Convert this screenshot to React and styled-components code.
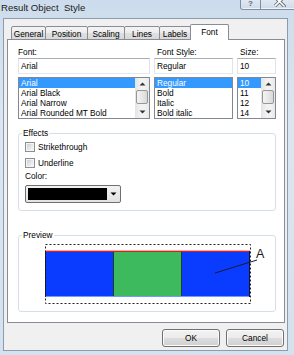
import React from 'react';
import styled, { createGlobalStyle } from 'styled-components';

const Global = createGlobalStyle`
  html, body { margin: 0; padding: 0; background: #d6e3f0; }
  body { font-family: "Liberation Sans", Arial, sans-serif; }
`;

const UI_FONT = '"Liberation Sans", Arial, sans-serif';

const Window = styled.div`
  width: 294px;
  height: 355px;
  box-sizing: border-box;
  display: flex;
  flex-direction: column;
  overflow: hidden;
  background: linear-gradient(180deg, #cddcec 0%, #dbe6f2 35%, #d4e1ee 100%);
  font-family: ${UI_FONT};
  font-size: 8.3px;
  color: #000;
`;

const TitleBar = styled.div`
  height: 18px;
  flex: none;
  display: flex;
  align-items: flex-start;
  justify-content: space-between;
`;

const Title = styled.div`
  padding: 3px 0 0 1px;
  font-size: 9.6px;
  line-height: 10px;
  color: #1a1a1a;
  white-space: pre;
`;

const CaptionButtons = styled.div`
  display: flex;
  margin-right: -10px;
`;

const CaptionButton = styled.div`
  width: ${(p) => p.$w}px;
  height: 10px;
  box-sizing: border-box;
  border: 1px solid #7f8fa3;
  border-top: none;
  border-radius: ${(p) => (p.$first ? '0 0 0 3px' : '0 0 3px 0')};
  margin-left: ${(p) => (p.$first ? 0 : -1)}px;
  background: linear-gradient(180deg, #dfe8f2, #cfdbe8);
  display: flex;
  justify-content: ${(p) => (p.$first ? 'center' : 'flex-start')};
  align-items: flex-start;
  padding-left: ${(p) => (p.$first ? 0 : 13)}px;
  overflow: hidden;
  box-shadow: inset 0 -1px 0 #eef3f8;
`;

const HelpGlyph = styled.span`
  font-family: ${UI_FONT};
  font-size: 8px;
  line-height: 8px;
  font-weight: bold;
  color: #5f6878;
`;

const Client = styled.div`
  flex: none;
  height: 333px;
  box-sizing: border-box;
  margin: 0 6px 4px 3px;
  border: 1px solid #8d9cad;
  background: #f0f0f0;
  padding: 5px 2px 0 3px;
  display: flex;
  flex-direction: column;
`;

const TabStrip = styled.div`
  height: 16px;
  flex: none;
  display: flex;
  align-items: flex-end;
  padding-left: 4px;
  margin-bottom: -1px;
`;

const Tab = styled.div`
  position: relative;
  z-index: ${(p) => (p.$active ? 2 : 1)};
  width: ${(p) => p.$w}px;
  height: ${(p) => (p.$active ? 16 : 14)}px;
  box-sizing: border-box;
  margin-left: ${(p) => (p.$first ? 0 : -1)}px;
  border: 1px solid #898c95;
  border-bottom: ${(p) => (p.$active ? 'none' : '1px solid #898c95')};
  border-radius: 2px 2px 0 0;
  background: ${(p) =>
    p.$active
      ? '#ffffff'
      : 'linear-gradient(180deg, #f4f4f4 0%, #ececec 50%, #e0e0e0 51%, #d8d8d8 100%)'};
  display: flex;
  justify-content: center;
  padding-top: 2px;
  line-height: 10px;
  white-space: nowrap;
  color: #000;
`;

const Panel = styled.div`
  position: relative;
  z-index: 1;
  height: 284px;
  flex: none;
  box-sizing: border-box;
  background: #ffffff;
  border: 1px solid #898c95;
  padding: 7px 8px 0 10px;
  display: flex;
  flex-direction: column;
`;

const FieldGrid = styled.div`
  display: grid;
  grid-template-columns: 132px 79px 39px;
  column-gap: 4px;
`;

const Field = styled.div`
  display: flex;
  flex-direction: column;
`;

const FieldLabel = styled.div`
  height: 10px;
  line-height: 10px;
  padding-left: ${(p) => p.$indent || 0}px;
  white-space: nowrap;
`;

const TextBox = styled.div`
  margin-top: 1px;
  height: 16px;
  box-sizing: border-box;
  border: 1px solid #e2e3ea;
  border-top-color: #abadb3;
  border-bottom-color: #e3e9ef;
  padding: 0 2px;
  line-height: 14px;
  white-space: nowrap;
`;

const ListBox = styled.div`
  margin-top: 3px;
  height: 42px;
  box-sizing: border-box;
  border: 1px solid #828790;
  display: flex;
  overflow: hidden;
  background: #fff;
`;

const ListItems = styled.div`
  flex: 1;
  min-width: 0;
  display: flex;
  flex-direction: column;
`;

const ListItem = styled.div`
  height: 10px;
  line-height: 10px;
  padding-left: 2px;
  white-space: nowrap;
  background: ${(p) => (p.$selected ? '#3399ff' : 'transparent')};
  color: ${(p) => (p.$selected ? '#ffffff' : '#000000')};
`;

const ScrollBar = styled.div`
  width: 14px;
  flex: none;
  display: flex;
  flex-direction: column;
  align-items: center;
  background: linear-gradient(90deg, #e4e4e4, #f2f2f2 40%, #f2f2f2 70%, #e8e8e8);
`;

const ScrollArrow = styled.div`
  height: 12px;
  width: 100%;
  display: flex;
  align-items: center;
  justify-content: center;
`;

const ScrollSpacer = styled.div`
  flex: 1;
`;

const ScrollThumb = styled.div`
  width: 12px;
  height: 14px;
  box-sizing: border-box;
  border: 1px solid #979797;
  border-radius: 2px;
  background: linear-gradient(90deg, #f3f3f3, #e8e8e8 50%, #d8d8d8);
`;

const Group = styled.fieldset`
  margin: ${(p) => p.$mt}px 0 0;
  padding: 0 6px ${(p) => p.$pb}px;
  border: 1px solid #d5dfe5;
  border-radius: 3px;
  min-width: 0;
  display: flex;
  flex-direction: column;
`;

const Legend = styled.legend`
  padding: 0 1px;
  margin-left: -3px;
  height: 10px;
  line-height: 10px;
  color: #000;
`;

const CheckRow = styled.div`
  height: 12px;
  margin-top: ${(p) => p.$mt}px;
  display: flex;
  align-items: center;
  gap: 3px;
  line-height: 10px;
`;

const CheckBox = styled.span`
  width: 10px;
  height: 10px;
  box-sizing: border-box;
  border: 1px solid #8e8f8f;
  box-shadow: inset 0 0 0 1px #f4f4f4;
  background: linear-gradient(135deg, #c6cad0, #eeeeee 70%, #f6f6f6);
`;

const PlainLabel = styled.div`
  margin-top: 2px;
  height: 10px;
  line-height: 10px;
`;

const ColorCombo = styled.div`
  margin-top: 4px;
  width: 96px;
  height: 18px;
  box-sizing: border-box;
  border: 1px solid #707070;
  border-radius: 2px;
  background: linear-gradient(180deg, #f2f2f2, #e2e2e2);
  padding: 2px;
  display: flex;
  gap: 1px;
`;

const ColorSwatch = styled.div`
  flex: 1;
  background: #000;
`;

const ComboArrow = styled.div`
  width: 10px;
  display: flex;
  align-items: center;
  justify-content: center;
`;

const PreviewCanvas = styled.svg`
  display: block;
  margin-bottom: 1px;
`;

const ButtonRow = styled.div`
  margin-top: 6px;
  display: flex;
  justify-content: flex-end;
  gap: 6px;
  padding-right: 1px;
`;

const Button = styled.div`
  width: 58px;
  height: 18px;
  box-sizing: border-box;
  border: 1px solid #707070;
  border-radius: 3px;
  background: linear-gradient(180deg, #f2f2f2 0%, #ebebeb 50%, #dddddd 51%, #cfcfcf 100%);
  box-shadow: inset 0 0 0 1px #fbfbfb;
  display: flex;
  align-items: center;
  justify-content: center;
  line-height: 10px;
  color: #000;
`;

const UpArrow = () => (
  <svg width="7" height="4" viewBox="0 0 7 4">
    <path d="M0.5 3.5 L3.5 0.5 L6.5 3.5 Z" fill="#333" />
  </svg>
);

const DownArrow = ({ color = '#333', w = 7, h = 4 }) => (
  <svg width={w} height={h} viewBox="0 0 7 4">
    <path d="M0.5 0.5 L3.5 3.5 L6.5 0.5 Z" fill={color} />
  </svg>
);

const CloseIcon = () => (
  <svg width="12" height="7" viewBox="0 0 12 7">
    <path d="M1 -3 L10 6 M10 -3 L1 6" stroke="#5d6573" strokeWidth="3.2" strokeLinecap="square" />
    <path d="M1 -3 L10 6 M10 -3 L1 6" stroke="#ffffff" strokeWidth="1.6" strokeLinecap="square" />
  </svg>
);

const Scroll = () => (
  <ScrollBar>
    <ScrollArrow>
      <UpArrow />
    </ScrollArrow>
    <ScrollThumb />
    <ScrollSpacer />
    <ScrollArrow>
      <DownArrow />
    </ScrollArrow>
  </ScrollBar>
);

const FontList = ({ items, scroll }) => (
  <ListBox>
    <ListItems>
      {items.map((it, i) => (
        <ListItem key={it} $selected={i === 0}>
          {it}
        </ListItem>
      ))}
    </ListItems>
    {scroll && <Scroll />}
  </ListBox>
);

const tabs = [
  { label: 'General', w: 35 },
  { label: 'Position', w: 43 },
  { label: 'Scaling', w: 38 },
  { label: 'Lines', w: 36 },
  { label: 'Labels', w: 32 },
  { label: 'Font', w: 39, active: true },
];

const Preview = () => (
  <PreviewCanvas width="244" height="70" viewBox="0 0 244 70">
    <rect x="20" y="11" width="205" height="46" fill="#0a3cff" />
    <rect x="88" y="12" width="68" height="44" fill="#3dba5e" />
    <line x1="20" y1="11.5" x2="225" y2="11.5" stroke="#e21b1b" strokeWidth="1" />
    <line x1="20" y1="10.5" x2="225" y2="10.5" stroke="#f4b0b0" strokeWidth="1" />
    <line x1="20" y1="56.5" x2="225" y2="56.5" stroke="#6f9cff" strokeWidth="1" />
    <line x1="20.5" y1="11" x2="20.5" y2="57" stroke="#101030" strokeWidth="1" />
    <line x1="224.5" y1="11" x2="224.5" y2="57" stroke="#101030" strokeWidth="1" />
    <line x1="88.5" y1="12" x2="88.5" y2="56" stroke="#1d3d2a" strokeWidth="1" />
    <line x1="156.5" y1="12" x2="156.5" y2="56" stroke="#1d3d2a" strokeWidth="1" />
    <rect
      x="20.5"
      y="4.5"
      width="205"
      height="59"
      fill="none"
      stroke="#222"
      strokeWidth="1"
      strokeDasharray="2 2"
    />
    <line x1="190" y1="33" x2="232" y2="20" stroke="#1a1a2a" strokeWidth="1" />
    <text x="231" y="18" fontFamily={UI_FONT} fontSize="12.5" fill="#1a1a1a">
      A
    </text>
  </PreviewCanvas>
);

export default function App() {
  return (
    <>
      <Global />
      <Window>
        <TitleBar>
          <Title>Result Object  Style</Title>
          <CaptionButtons>
            <CaptionButton $w={21} $first>
              <HelpGlyph>?</HelpGlyph>
            </CaptionButton>
            <CaptionButton $w={44}>
              <CloseIcon />
            </CaptionButton>
          </CaptionButtons>
        </TitleBar>
        <Client>
          <TabStrip>
            {tabs.map((t, i) => (
              <Tab key={t.label} $w={t.w} $active={t.active} $first={i === 0}>
                {t.label}
              </Tab>
            ))}
          </TabStrip>
          <Panel>
            <FieldGrid>
              <Field>
                <FieldLabel>Font:</FieldLabel>
                <TextBox>Arial</TextBox>
                <FontList
                  scroll
                  items={['Arial', 'Arial Black', 'Arial Narrow', 'Arial Rounded MT Bold']}
                />
              </Field>
              <Field>
                <FieldLabel $indent={3}>Font Style:</FieldLabel>
                <TextBox>Regular</TextBox>
                <FontList items={['Regular', 'Bold', 'Italic', 'Bold italic']} />
              </Field>
              <Field>
                <FieldLabel $indent={3}>Size:</FieldLabel>
                <TextBox>10</TextBox>
                <FontList scroll items={['10', '11', '12', '14']} />
              </Field>
            </FieldGrid>
            <Group $mt={9} $pb={7}>
              <Legend>Effects</Legend>
              <CheckRow $mt={3}>
                <CheckBox />
                Strikethrough
              </CheckRow>
              <CheckRow $mt={4}>
                <CheckBox />
                Underline
              </CheckRow>
              <PlainLabel>Color:</PlainLabel>
              <ColorCombo>
                <ColorSwatch />
                <ComboArrow>
                  <DownArrow color="#000" w={7} h={4} />
                </ComboArrow>
              </ColorCombo>
            </Group>
            <Group $mt={19} $pb={0}>
              <Legend>Preview</Legend>
              <Preview />
            </Group>
          </Panel>
          <ButtonRow>
            <Button>OK</Button>
            <Button>Cancel</Button>
          </ButtonRow>
        </Client>
      </Window>
    </>
  );
}
